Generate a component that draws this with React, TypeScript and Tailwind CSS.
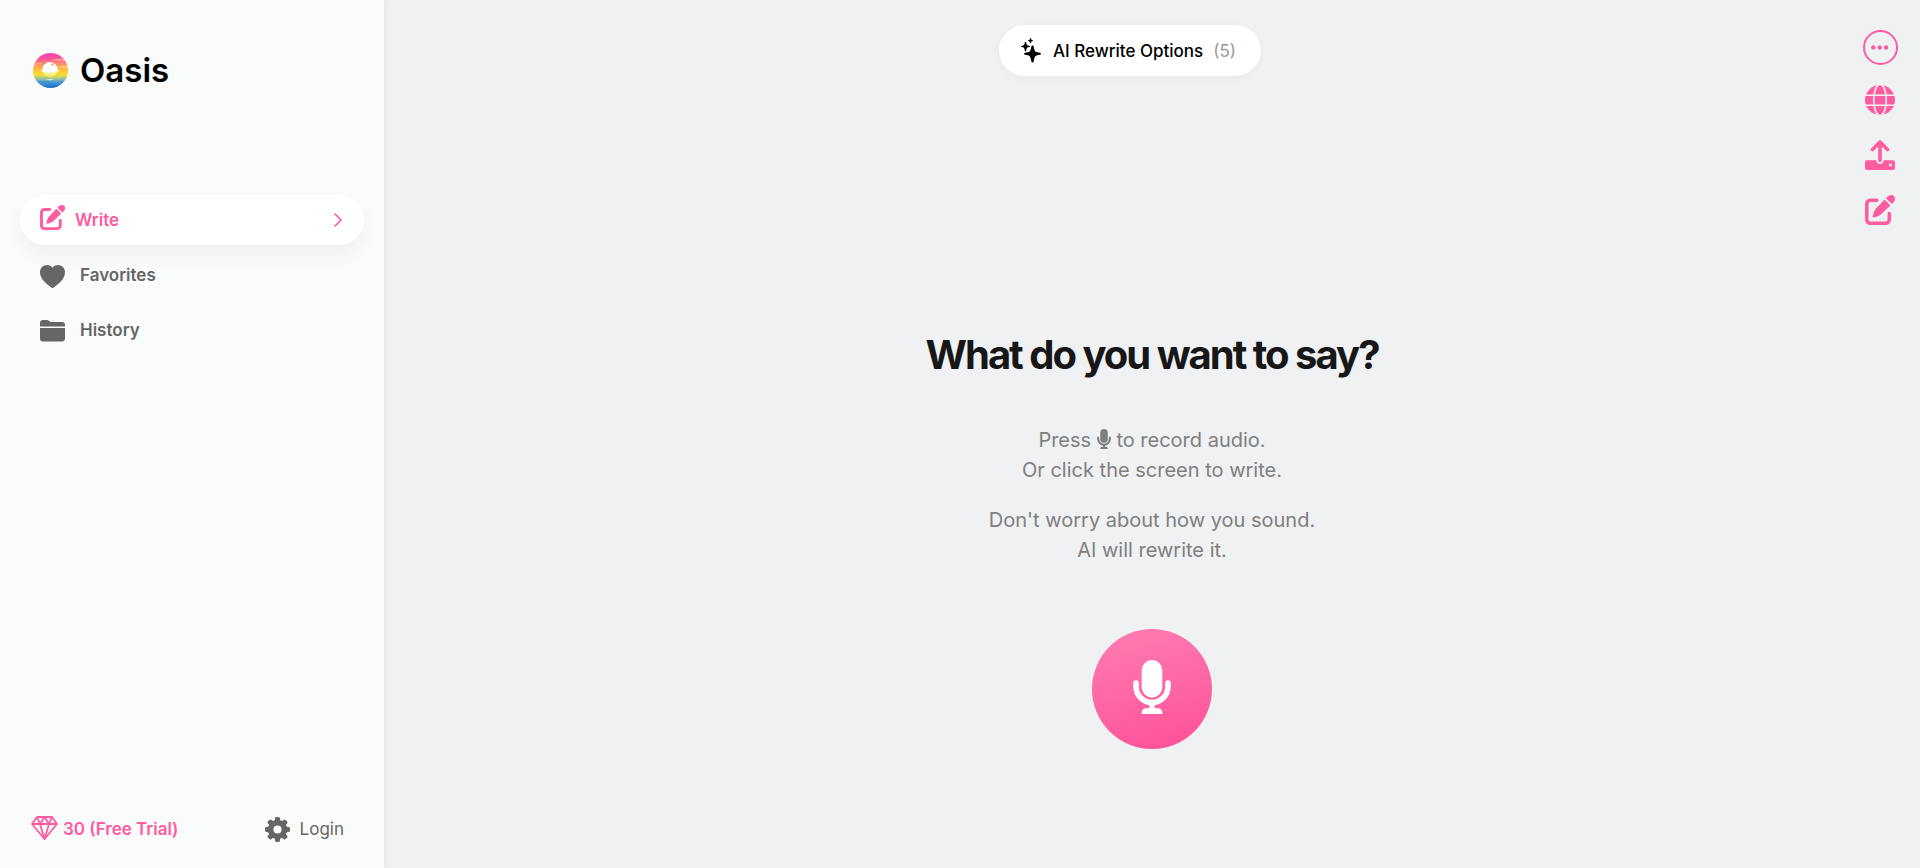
import type { ReactNode } from "react";

type IconProps = { className?: string };

function LogoMark({ className }: IconProps) {
  return (
    <svg viewBox="0 0 35 35" className={className} aria-hidden="true">
      <defs>
        <linearGradient id="sky" x1="0" y1="0" x2="0" y2="1">
          <stop offset="0" stopColor="#fb3fb4" />
          <stop offset="0.17" stopColor="#fb559c" />
          <stop offset="0.34" stopColor="#ff9a62" />
          <stop offset="0.48" stopColor="#ffc03c" />
          <stop offset="0.62" stopColor="#f5e02e" />
          <stop offset="0.72" stopColor="#b8cf80" />
          <stop offset="0.8" stopColor="#5aa5cc" />
          <stop offset="1" stopColor="#1767c9" />
        </linearGradient>
        <linearGradient id="sun" x1="0" y1="0" x2="0" y2="1">
          <stop offset="0.45" stopColor="#ffffff" />
          <stop offset="0.85" stopColor="#f4ef7a" />
          <stop offset="1" stopColor="#eeea50" />
        </linearGradient>
        <clipPath id="disc">
          <circle cx="17.5" cy="17.5" r="17.5" />
        </clipPath>
      </defs>
      <g clipPath="url(#disc)">
        <rect width="35" height="35" fill="url(#sky)" />
        <path d="M17 7.4q9-2.400 15-1.200l1 1.600q-7-1-16-.4z" fill="#ffb3a0" />
        <path d="M0 11q6-2 11-.4q-6 .2-11 1.800z" fill="#ffb38a" />
        <path d="M24 14q6-1.500 11-.6v2q-5-1-11-1.400z" fill="#ffd98a" />
        <circle cx="17" cy="16.500" r="7.500" fill="url(#sun)" />
        <path d="M7.500 18q2-1.500 3.500-1.500q6-1.500 12 0q2 0 3.500 1.300q-3 1.200-5 .9q-5 1.300-9 .4q-3 0-5-1.100z" fill="#fff" />
        <circle cx="19.500" cy="11.500" r="1.300" fill="#ffb347" />
        <path d="M0 25q9-1 17 .5t18-1" stroke="#8fc2a5" strokeWidth="1" fill="none" />
        <path d="M13 26.500q4-1.300 8-.3q-2 1.200-4 1q-2.500.3-4-.7z" fill="#cfe3d2" />
        <path d="M3 29.500q7-1.500 13 .4t14-.4" stroke="#3a8fdc" strokeWidth="1.2" fill="none" />
      </g>
    </svg>
  );
}

function EditIcon({ className }: IconProps) {
  return (
    <svg viewBox="0 0 30 30" className={className} fill="none" aria-hidden="true">
      <path
        d="M11.8 5.3H5.3a3.5 3.5 0 0 0-3.5 3.5v16a3.5 3.5 0 0 0 3.5 3.5h15.5a3.5 3.5 0 0 0 3.5-3.5v-6.200"
        stroke="currentColor"
        strokeWidth="3.5"
        strokeLinecap="round"
      />
      <path
        d="M19.600 4.600l5.800 5.800L15.800 19.600q-2.800 2.300-7.200 2.900q-1 .1-.9-.9q.5-4.700 2.800-7.600z"
        fill="currentColor"
      />
      <path
        d="M20.900 3.200l1.700-1.700q1.600-1.500 3.600-1.500a3.700 3.700 0 0 1 3.800 3.800q0 2-1.500 3.600l-1.700 1.700z"
        fill="currentColor"
      />
    </svg>
  );
}

function HeartIcon({ className }: IconProps) {
  return (
    <svg viewBox="0 0 25 23" className={className} fill="currentColor" aria-hidden="true">
      <path d="M12.5 2.7C13.8.9 15.6 0 17.9 0C21.9 0 25 3 25 7.2c0 6.8-6.6 11.9-11.7 15.5a1.4 1.4 0 0 1-1.6 0C6.6 19.1 0 14 0 7.2C0 3 3.1 0 7.1 0c2.3 0 4.1.9 5.4 2.7z" />
    </svg>
  );
}

function FolderIcon({ className }: IconProps) {
  return (
    <svg viewBox="0 0 25 22" className={className} fill="currentColor" aria-hidden="true">
      <path d="M0 6.6V3a3 3 0 0 1 3-3h3.9q1.1 0 2 .7l1.1.8q.7.5 1.5.5H22a3 3 0 0 1 3 3v1.6z" />
      <path d="M0 8h25v10.5a3 3 0 0 1-3 3H3a3 3 0 0 1-3-3z" />
    </svg>
  );
}

function ChevronIcon({ className }: IconProps) {
  return (
    <svg viewBox="0 0 8 14" className={className} fill="none" aria-hidden="true">
      <path d="M1 1l6 6-6 6" stroke="currentColor" strokeWidth="1.7" strokeLinecap="round" strokeLinejoin="round" />
    </svg>
  );
}

function DiamondIcon({ className }: IconProps) {
  return (
    <svg
      viewBox="0 0 27 24"
      className={className}
      fill="none"
      stroke="currentColor"
      strokeWidth="1.8"
      strokeLinejoin="round"
      aria-hidden="true"
    >
      <path d="M6 1h15l5 7-12.5 15L1 8z" />
      <path d="M1 8h25M6 1l3 7 4.5-7L18 8l3-7M9 8l4.5 15L18 8" />
    </svg>
  );
}

const TEETH = [0, 45, 90, 135, 180, 225, 270, 315];

function GearIcon({ className }: IconProps) {
  return (
    <svg viewBox="0 0 25 25" className={className} aria-hidden="true">
      <circle cx="12.5" cy="12.5" r="6.9" fill="none" stroke="currentColor" strokeWidth="5.6" />
      {TEETH.map((deg) => (
        <path
          key={deg}
          d="M9.7 4L10.1 1.2Q10.3 0 11.5 0h2q1.2 0 1.4 1.2L15.3 4z"
          fill="currentColor"
          transform={`rotate(${deg} 12.5 12.5)`}
        />
      ))}
    </svg>
  );
}

function SparklesIcon({ className }: IconProps) {
  return (
    <svg viewBox="0 0 20 25" className={className} fill="currentColor" aria-hidden="true">
      <path d="M11.5 7.5q1 0 1.2 1.2q.8 4.7 2.2 5.1q.8.4 4 .9q1.1.3 1.1 1.1t-1.1 1q-3.2.5-4 .9q-1.4.6-2.2 5.6q-.2 1.2-1.2 1.2t-1.2-1.2q-.8-5-2.2-5.6q-.8-.4-4-.9Q3 16.6 3 15.8t1.1-1.1q3.2-.5 4-.9q1.4-.4 2.2-5.1q.2-1.2 1.2-1.2z" />
      <path d="M4.5 3.7q.5 0 .6.6q.4 2.3.9 2.8t2.5.8q.6.1.6.6t-.6.6q-2 .3-2.5.8t-.9 2.8q-.1.6-.6.6t-.6-.6q-.4-2.3-.9-2.8T.6 9.1Q0 9 0 8.5t.6-.6q1.9-.3 2.4-.8t.9-2.8q.1-.6.6-.6z" />
      <path d="M9.5 0q.4 0 .5.4q.3 1.2.5 1.4t1.2.4q.4.1.4.4t-.4.4q-1 .2-1.2.4T10 4.8q-.1.4-.5.4T9 4.8q-.3-1.2-.5-1.4T7.3 3q-.4-.1-.4-.4t.4-.4q1-.2 1.2-.4T9 .4q.1-.4.5-.4z" />
    </svg>
  );
}

function MicIcon({ className }: IconProps) {
  return (
    <svg viewBox="0 0 38 54" className={className} fill="none" aria-hidden="true">
      <rect x="8.7" y="0" width="20.6" height="37.5" rx="10.3" fill="currentColor" />
      <path
        d="M3 23v3.5a16 16 0 0 0 32 0V23"
        stroke="currentColor"
        strokeWidth="5.6"
        strokeLinecap="round"
      />
      <path d="M19 43v8" stroke="currentColor" strokeWidth="5.4" />
      <path d="M8.7 54v-1.5a4.2 4.2 0 0 1 4.2-4.2h12.2a4.2 4.2 0 0 1 4.2 4.2V54z" fill="currentColor" />
    </svg>
  );
}

function MoreIcon({ className }: IconProps) {
  return (
    <svg viewBox="0 0 35 35" className={className} fill="currentColor" aria-hidden="true">
      <circle cx="17.5" cy="17.5" r="16.5" fill="none" stroke="currentColor" strokeWidth="2" />
      <circle cx="10.3" cy="17.5" r="2.2" />
      <circle cx="16.7" cy="17.5" r="2.2" />
      <circle cx="23.1" cy="17.5" r="2.2" />
    </svg>
  );
}

function GlobeIcon({ className }: IconProps) {
  return (
    <svg viewBox="0 0 30 30" className={className} aria-hidden="true">
      <circle cx="15" cy="15" r="15" fill="currentColor" />
      <g fill="none" stroke="#eff1f3" strokeWidth="1.6">
        <ellipse cx="15" cy="15" rx="6.3" ry="15.5" />
        <path d="M0 10.3h30M0 20.2h30" />
      </g>
    </svg>
  );
}

function UploadIcon({ className }: IconProps) {
  return (
    <svg viewBox="0 0 30 30" className={className} fill="none" aria-hidden="true">
      <rect x="0" y="20.3" width="30" height="9.7" rx="2" fill="currentColor" />
      <circle cx="25.3" cy="25" r="1.4" fill="#eff1f3" />
      <path d="M15 18v2.5" stroke="#eff1f3" strokeWidth="7" strokeLinecap="round" />
      <path
        d="M15 20.5V2.2M7.5 9.5L15 2l7.5 7.5"
        stroke="currentColor"
        strokeWidth="3.6"
        strokeLinecap="round"
        strokeLinejoin="round"
      />
    </svg>
  );
}

function NavItem({ icon, label }: { icon: ReactNode; label: string }) {
  return (
    <a href="#" className="flex h-[50px] items-center gap-[15px] px-5 font-semibold text-[#666]">
      {icon}
      {label}
    </a>
  );
}

const TOOLS = [
  { label: "Language", icon: <GlobeIcon className="size-[30px]" /> },
  { label: "Upload", icon: <UploadIcon className="size-[30px]" /> },
  { label: "New note", icon: <EditIcon className="size-[30px]" /> },
];

function Sidebar() {
  return (
    <aside className="z-10 flex w-96 shrink-0 flex-col bg-[#fafbfb] px-5 shadow-[0_0_10px_rgba(0,0,0,0.08)]">
      <a href="#" className="mt-[50px] flex h-10 items-center gap-3 px-[13px] text-black">
        <LogoMark className="size-[35px]" />
        <span className="text-[33px] leading-10 font-semibold">Oasis</span>
      </a>

      <nav className="mt-[105px] flex flex-col gap-[5px]">
        <a
          href="#"
          aria-current="page"
          className="flex h-[50px] items-center gap-[10px] rounded-full bg-white px-5 font-semibold text-[#ff5ca0] shadow-[0_10px_20px_rgba(20,20,60,0.05)]"
        >
          <EditIcon className="mb-1.5 size-[25px]" />
          Write
          <ChevronIcon className="mr-0.5 ml-auto h-[14px] w-2" />
        </a>
        <NavItem icon={<HeartIcon className="mt-0.5 h-[23px] w-[25px]" />} label="Favorites" />
        <NavItem icon={<FolderIcon className="mt-0.5 h-[22px] w-[25px]" />} label="History" />
      </nav>

      <footer className="mt-auto mb-[26px] flex items-center justify-between pr-5 pl-[11px]">
        <button type="button" className="flex items-center gap-[5px] font-semibold text-[#ff5ca0]">
          <DiamondIcon className="mb-0.5 h-6 w-[27px]" />
          30 (Free Trial)
        </button>
        <button type="button" className="flex items-center gap-[10px] text-[#666]">
          <GearIcon className="size-[25px]" />
          Login
        </button>
      </footer>
    </aside>
  );
}

export default function App() {
  return (
    <div className="flex min-h-screen bg-[#eff1f3] font-['Inter',sans-serif] text-[17px] leading-6">
      <Sidebar />

      <main className="flex flex-1 flex-col">
        <header className="flex items-start pr-[22px] pl-[13px]">
          <div className="flex flex-1 justify-center pt-[25px]">
            <button
              type="button"
              className="flex h-[51px] items-center rounded-full bg-white pr-[25px] pl-[22px] text-black shadow-[0_2px_8px_rgba(0,0,0,0.04)]"
            >
              <SparklesIcon className="mr-3 h-[25px] w-5" />
              <span className="font-medium">AI Rewrite Options</span>
              <span className="ml-[10px] text-[#999]">(5)</span>
            </button>
          </div>
          <div className="flex flex-col gap-[25px] pt-[30px]">
            <button type="button" aria-label="More" className="-mb-[5px] text-[#ff5ca0]">
              <MoreIcon className="size-[35px]" />
            </button>
            {TOOLS.map((tool) => (
              <button key={tool.label} type="button" aria-label={tool.label} className="pl-0.5 text-[#ff5ca0]">
                {tool.icon}
              </button>
            ))}
          </div>
        </header>

        <section className="flex flex-1 flex-col items-center justify-center pb-[14px] text-center">
          <h1 className="text-[40px] leading-[48px] font-bold tracking-tighter text-[#171717]">
            What do you want to say?
          </h1>
          <div className="mt-[46px] flex flex-col gap-5 text-xl leading-[30px] text-[#7f7f7f]">
            <p>
              Press <MicIcon className="inline-block h-5 w-[14px] align-[-2px]" /> to record audio.
              <br />
              Or click the screen to write.
            </p>
            <p>
              Don't worry about how you sound.
              <br />
              AI will rewrite it.
            </p>
          </div>
          <button
            type="button"
            aria-label="Record audio"
            className="mt-16 flex size-[120px] items-center justify-center rounded-full bg-linear-[165deg,#ff7eb3,#ff4f98] text-white"
          >
            <MicIcon className="mb-1 h-[54px] w-[38px]" />
          </button>
        </section>
      </main>
    </div>
  );
}
